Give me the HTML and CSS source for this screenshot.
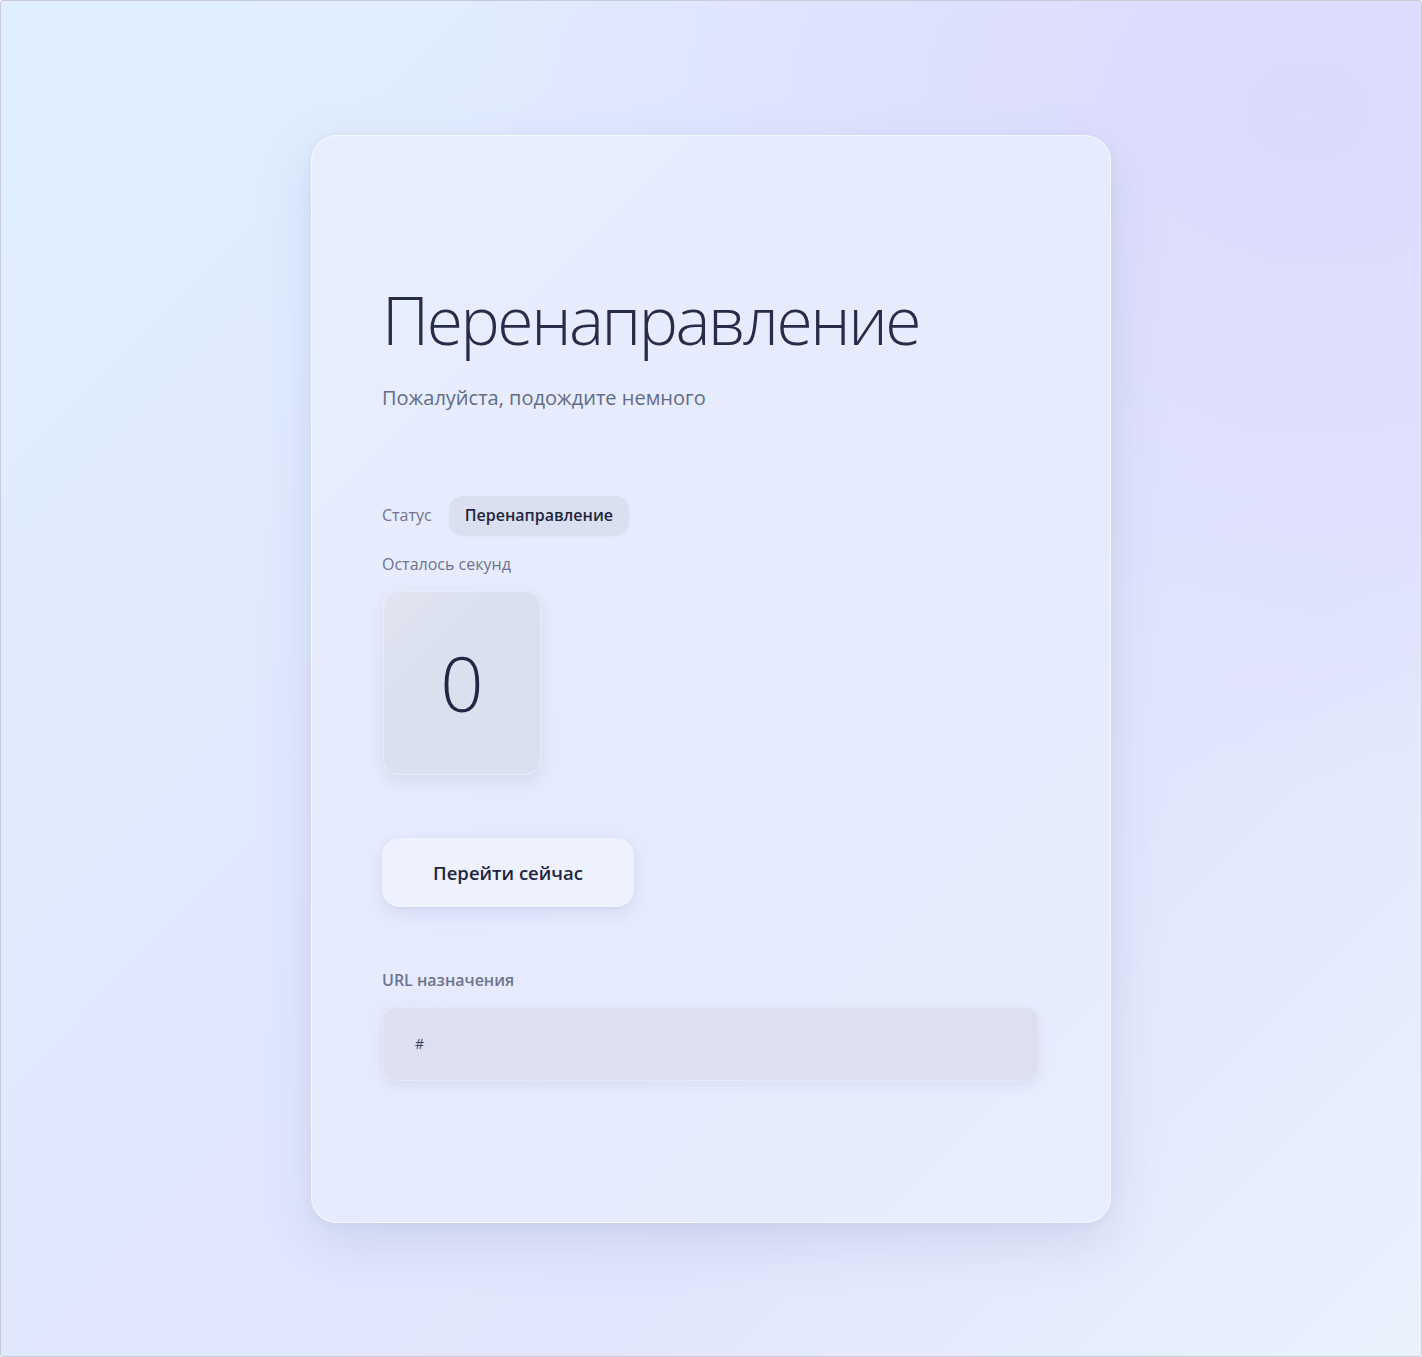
FILE: index.html
```html
<!DOCTYPE html>
<html lang="ru">
<head>
<meta charset="utf-8">
<title>Перенаправление</title>
<link rel="stylesheet" href="styles.css">
</head>
<body>
<div class="frame">
  <main class="card">
    <h1 class="title">Перенаправление</h1>
    <p class="subtitle">Пожалуйста, подождите немного</p>

    <div class="status-row">
      <span class="label">Статус</span>
      <span class="pill">Перенаправление</span>
    </div>
    <div class="label seconds-label">Осталось секунд</div>
    <div class="counter">0</div>

    <button class="go-btn" type="button">Перейти сейчас</button>

    <div class="url-label">URL назначения</div>
    <div class="url-box">#</div>
  </main>
</div>
</body>
</html>
```

FILE: styles.css
```css
html, body {
  margin: 0;
  padding: 0;
  height: 100%;
}

body {
  font-family: "Open Sans", "Noto Sans", "Liberation Sans", sans-serif;
  color: #1f2744;
}

.frame {
  box-sizing: border-box;
  height: 100vh;
  border: 1px solid #c9ccd6;
  border-radius: 3px;
  background:
    radial-gradient(ellipse 60% 50% at 92% 8%, rgba(220, 218, 253, 1) 0%, rgba(220, 218, 253, 0) 100%),
    linear-gradient(135deg, #e0f0ff 0%, #e0e8fd 45%, #e2e6fc 70%, #e9f2fd 100%);
  display: flex;
  align-items: center;
  justify-content: center;
}

.card {
  box-sizing: border-box;
  width: 800px;
  height: 1088px;
  padding: 138px 72px 0 70px;
  border-radius: 26px;
  background: linear-gradient(135deg, #e7effe 0%, #e6eafd 50%, #e7eefd 100%);
  border: 1px solid rgba(255, 255, 255, 0.6);
  box-shadow: 0 20px 50px rgba(150, 160, 200, 0.28), 0 2px 8px rgba(150, 160, 200, 0.12);
  display: flex;
  flex-direction: column;
  align-items: flex-start;
}

.title {
  margin: 0;
  font-weight: 300;
  font-size: 66px;
  line-height: 90px;
  letter-spacing: -2.45px;
  color: #252d4a;
}

.subtitle {
  margin: 21px 0 0;
  font-size: 20px;
  line-height: 26px;
  color: #636c86;
}

.status-row {
  margin-top: 85px;
  display: flex;
  align-items: center;
  gap: 17px;
}

.label {
  font-size: 16px;
  line-height: 22px;
  color: #6c7490;
}

.pill {
  display: inline-flex;
  align-items: center;
  height: 39px;
  padding: 0 16px;
  border-radius: 14px;
  background: #dbe0f1;
  font-size: 16px;
  font-weight: 600;
  color: #1e2540;
  box-shadow: 0 1px 2px rgba(120, 130, 170, 0.12);
}

.seconds-label {
  margin-top: 18px;
}

.counter {
  margin-top: 16px;
  margin-left: 1px;
  width: 158px;
  height: 184px;
  border-radius: 16px;
  background: linear-gradient(135deg, #e2e5f1 0%, #dbe0ef 35%, #dbe0ef 100%);
  box-shadow: 0 6px 16px rgba(150, 160, 200, 0.22), inset 0 0 0 1px rgba(255, 255, 255, 0.35);
  display: flex;
  align-items: center;
  justify-content: center;
  font-size: 76px;
  font-weight: 300;
  color: #1f2744;
}

.go-btn {
  margin-top: 63px;
  width: 252px;
  height: 69px;
  border: none;
  border-radius: 17px;
  background: #eef2fe;
  box-shadow: 0 6px 16px rgba(150, 160, 210, 0.22), 0 1px 2px rgba(150, 160, 210, 0.15);
  font-family: inherit;
  font-size: 18.5px;
  font-weight: 600;
  color: #1e2540;
  cursor: pointer;
}

.url-label {
  margin-top: 62px;
  font-size: 16px;
  font-weight: 600;
  line-height: 22px;
  color: #6c7490;
}

.url-box {
  box-sizing: border-box;
  margin-top: 16px;
  margin-left: 1px;
  width: 656px;
  height: 74px;
  border-radius: 13px;
  background: #dce0f1;
  box-shadow: 0 4px 12px rgba(150, 160, 200, 0.18), inset 0 0 0 1px rgba(255, 255, 255, 0.3);
  display: flex;
  align-items: center;
  padding-left: 32px;
  font-size: 14px;
  color: #3a425e;
}
```
